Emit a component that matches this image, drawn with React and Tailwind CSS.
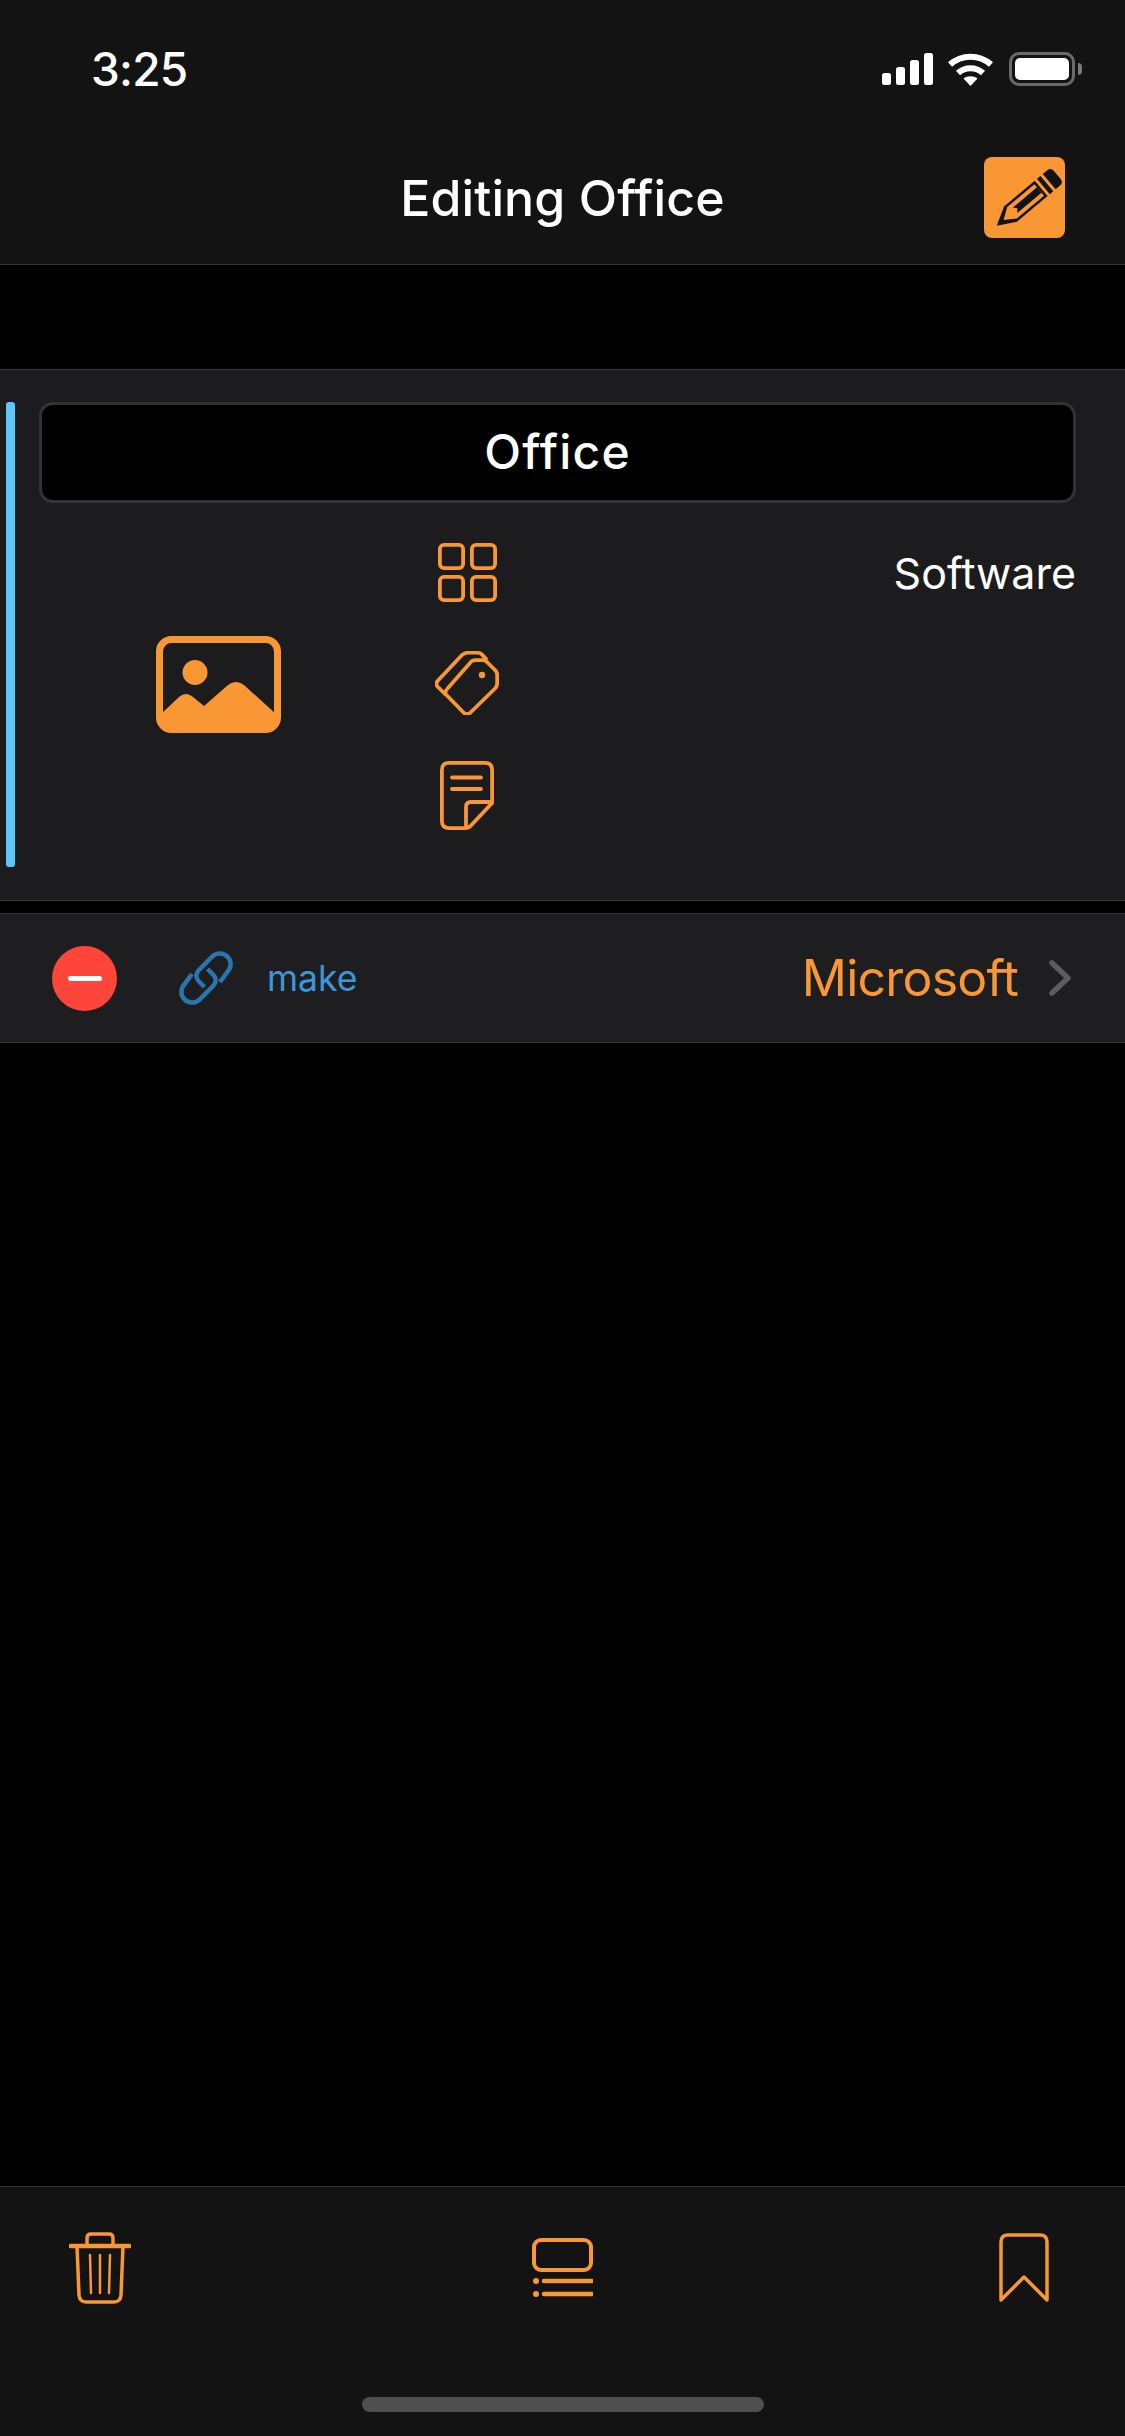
import React from "react";

const ORANGE = "#f89733";

// Status bar glyphs
const SignalIcon = () => (
  <svg width="51" height="32" viewBox="0 0 51 32" fill="#fff">
    <rect x="0" y="20" width="9" height="12" rx="2.5" />
    <rect x="14" y="14" width="9" height="18" rx="2.5" />
    <rect x="28" y="7" width="9" height="25" rx="2.5" />
    <rect x="42" y="0" width="9" height="32" rx="2.5" />
  </svg>
);

const WifiIcon = () => (
  <svg width="45" height="33" viewBox="0 0 45 33" fill="none" stroke="#fff" strokeWidth="6">
    <path d="M2 11.5C13.5 1 31.5 1 43 11.5" />
    <path d="M10 20C17 13.5 28 13.5 35 20" />
    <path d="M15.5 25.5C19.5 22.5 25.5 22.5 29.5 25.5L22.5 33Z" fill="#fff" stroke="none" />
  </svg>
);

const BatteryIcon = () => (
  <div className="flex items-center">
    <div className="w-[66px] h-[34px] rounded-[10px] border-[3px] border-[#6a6a6a] p-[3px]">
      <div className="w-full h-full rounded-[5px] bg-white" />
    </div>
    <div className="ml-[3px] w-[4px] h-[12px] rounded-r-full bg-[#7a7a7a]" />
  </div>
);

const PencilIcon = () => (
  <svg width="81" height="81" viewBox="0 0 81 81">
    <g transform="translate(12.7 68.7) rotate(-40)" fill="#131313">
      <path d="M0 0L18 -10H58V10H18Z" />
      <path d="M9 0L20 -7.5H55.5V7.5H20Z" fill={ORANGE} />
      <path d="M24 -3.5H55.5V3.5H24L27 0Z" />
      <rect x="61" y="-10" width="4.5" height="20" />
      <path d="M68.5 -10H74Q79 -10 79 -5V5Q79 10 74 10H68.5Z" />
    </g>
  </svg>
);

const ImageIcon = () => (
  <svg width="125" height="97" viewBox="0 0 125 97" fill={ORANGE}>
    <rect x="3.5" y="3.5" width="118" height="90" rx="12" fill="none" stroke={ORANGE} strokeWidth="7" />
    <circle cx="39" cy="36.5" r="12.5" />
    <path d="M5 78L23 61Q30 55 37 61L48 70L72 49Q80 43 88 49L120 78V88Q120 95 112 95H13Q5 95 5 88Z" />
  </svg>
);

const GridIcon = () => (
  <svg width="59" height="59" viewBox="0 0 59 59" fill="none" stroke={ORANGE} strokeWidth="3.8">
    <rect x="1.9" y="1.9" width="23.2" height="23.2" rx="4" />
    <rect x="33.9" y="1.9" width="23.2" height="23.2" rx="4" />
    <rect x="1.9" y="33.9" width="23.2" height="23.2" rx="4" />
    <rect x="33.9" y="33.9" width="23.2" height="23.2" rx="4" />
  </svg>
);

const TagIcon = () => (
  <svg width="64" height="64" viewBox="0 0 64 64" fill="none" stroke={ORANGE} strokeWidth="3.8" strokeLinejoin="round">
    <path d="M10.5 43Q10 40 12.5 37.5L35 12Q37 9.2 40 9.2H47Q50 9.2 52 11L60.5 19.5Q62.2 21.5 62.2 24V32Q62.2 35 60.5 37L35 62Q32 64 29 62Z" />
    <path d="M11 44L2.5 35.5Q0.2 33 2.5 30L27 4Q30 1.7 33 1.7H42Q45 1.7 47 3.5L52 9" />
    <circle cx="47" cy="24" r="3.2" fill={ORANGE} stroke="none" />
  </svg>
);

const NoteIcon = () => (
  <svg width="54" height="69" viewBox="0 0 54 69" fill="none" stroke={ORANGE} strokeWidth="3.8" strokeLinecap="round" strokeLinejoin="round">
    <path d="M9 1.9H45Q52.1 1.9 52.1 9V42L31 64.5Q28.5 67.1 25 67.1H9Q1.9 67.1 1.9 60V9Q1.9 1.9 9 1.9Z" />
    <path d="M12 16.5H41M12 28H41" />
    <path d="M26 66V46Q26 41 31 41H52" />
  </svg>
);

const LinkIcon = () => (
  <svg width="54" height="54" viewBox="0 0 54 54" fill="none" stroke="#2a75ad" strokeWidth="4.5">
    <path d="M41 31L48.6 20.6A10.75 10.75 0 0 0 33.4 5.4L19.5 19.5A7.5 7.5 0 0 0 19.5 30L25.5 36" />
    <path d="M13 23L5.4 33.4A10.75 10.75 0 0 0 20.6 48.6L34.5 34.5A7.5 7.5 0 0 0 34.5 24L28.5 18" />
  </svg>
);

const TrashIcon = () => (
  <svg width="62" height="72" viewBox="0 0 62 72" fill="none" stroke={ORANGE} strokeWidth="3.5" strokeLinecap="round">
    <path d="M1.5 14H60.5" strokeWidth="4.5" />
    <path d="M18 14V6Q18 2 22 2H40Q44 2 44 6V14" />
    <path d="M8 14L10 63Q10.5 70 17 70H45Q51.5 70 52 63L54 14" />
    <path d="M21 23L22 61M31 23V61M41 23L40 61" strokeWidth="2.5" />
  </svg>
);

const ListIcon = () => (
  <svg width="61" height="59" viewBox="0 0 61 59" fill="none" stroke={ORANGE}>
    <rect x="2" y="2" width="57" height="30" rx="7" strokeWidth="4" />
    <circle cx="4" cy="43" r="3" fill={ORANGE} stroke="none" />
    <circle cx="4" cy="56" r="3" fill={ORANGE} stroke="none" />
    <path d="M12 43H60M12 56H60" strokeWidth="4.5" strokeLinecap="round" />
  </svg>
);

const BookmarkIcon = () => (
  <svg width="50" height="69" viewBox="0 0 50 69" fill="none" stroke={ORANGE} strokeWidth="3.5" strokeLinejoin="round">
    <path d="M2 67V9Q2 2 9 2H41Q48 2 48 9V67L25 44Z" />
  </svg>
);

export default function App() {
  return (
    <div className="min-h-[2436px] flex flex-col bg-black text-white font-['Inter',sans-serif]">
      {/* Nav header with status bar */}
      <header className="h-[265px] bg-[#131313] border-b border-[#333335]">
        <div className="flex items-center h-[34px] mt-[52px] pl-[91px] pr-[43px]">
          <span className="text-[46px] leading-[34px] font-[550] tracking-[-0.8px]">3:25</span>
          <div className="ml-auto flex items-center gap-[15px]">
            <SignalIcon />
            <WifiIcon />
            <div className="ml-px"><BatteryIcon /></div>
          </div>
        </div>
        <div className="grid grid-cols-[1fr_auto_1fr] items-center mt-[71px] px-[60px]">
          <div />
          <h1 className="text-[50px] leading-[60px] font-[550] tracking-[0.1px]">Editing Office</h1>
          <button className="justify-self-end w-[81px] h-[81px] rounded-[8px] bg-[#f89733]">
            <PencilIcon />
          </button>
        </div>
      </header>

      <div className="h-[104px]" />

      {/* Item editor */}
      <section className="h-[532px] flex pl-[6px] pr-[49px] pt-[32px] bg-[#1c1c1e] border-y border-[#38383a]">
        <div className="w-[9px] h-[465px] rounded-[3px] bg-[#5ac8fa]" />
        <div className="ml-[24px] flex-1">
          <div className="h-[101px] pb-[2px] flex items-center justify-center rounded-[14px] border-[3px] border-[#333335] bg-black text-[48px] font-[550] tracking-[1.2px]">
            Office
          </div>
          <div className="flex mt-[40px]">
            <div className="w-[396px] pl-[117px] pb-[5px] flex items-center">
              <ImageIcon />
            </div>
            <div className="w-[64px] flex flex-col items-center">
              <GridIcon />
              <div className="mt-[49px]"><TagIcon /></div>
              <div className="mt-[46px]"><NoteIcon /></div>
            </div>
            <span className="ml-auto mt-[5px] text-[43px] leading-[50px]">Software</span>
          </div>
        </div>
      </section>

      <div className="h-[12px]" />

      {/* Relation row */}
      <div className="h-[130px] flex items-center pl-[52px] pr-[54px] bg-[#1e1e20] border-y border-[#38383a]">
        <div className="w-[65px] h-[65px] rounded-full bg-[#ff453a] flex items-center justify-center">
          <div className="w-[34px] h-[5px] rounded-full bg-white" />
        </div>
        <div className="ml-[62px]"><LinkIcon /></div>
        <span className="ml-[34px] pt-[2px] text-[35.5px] text-[#3a97dc]">make</span>
        <span className="ml-auto text-[50px] tracking-[-0.8px] text-[#f89733]">Microsoft</span>
        <svg className="ml-[31px]" width="22" height="36" viewBox="0 0 22 36" fill="none" stroke="#5c5c60" strokeWidth="5.5" strokeLinecap="round" strokeLinejoin="round">
          <path d="M3 3L19 18L3 33" />
        </svg>
      </div>

      {/* Bottom toolbar */}
      <footer className="mt-auto h-[250px] bg-[#131313] border-t border-[#333335]">
        <div className="flex items-start h-[72px] mt-[45px] pl-[69px]">
          <TrashIcon />
          <div className="ml-[401px] mt-[6px]"><ListIcon /></div>
          <div className="ml-[406px] mt-[1px]"><BookmarkIcon /></div>
        </div>
        <div className="w-[402px] h-[15px] mx-auto mt-[93px] rounded-[8px] bg-[#4f4f4f]" />
      </footer>
    </div>
  );
}
